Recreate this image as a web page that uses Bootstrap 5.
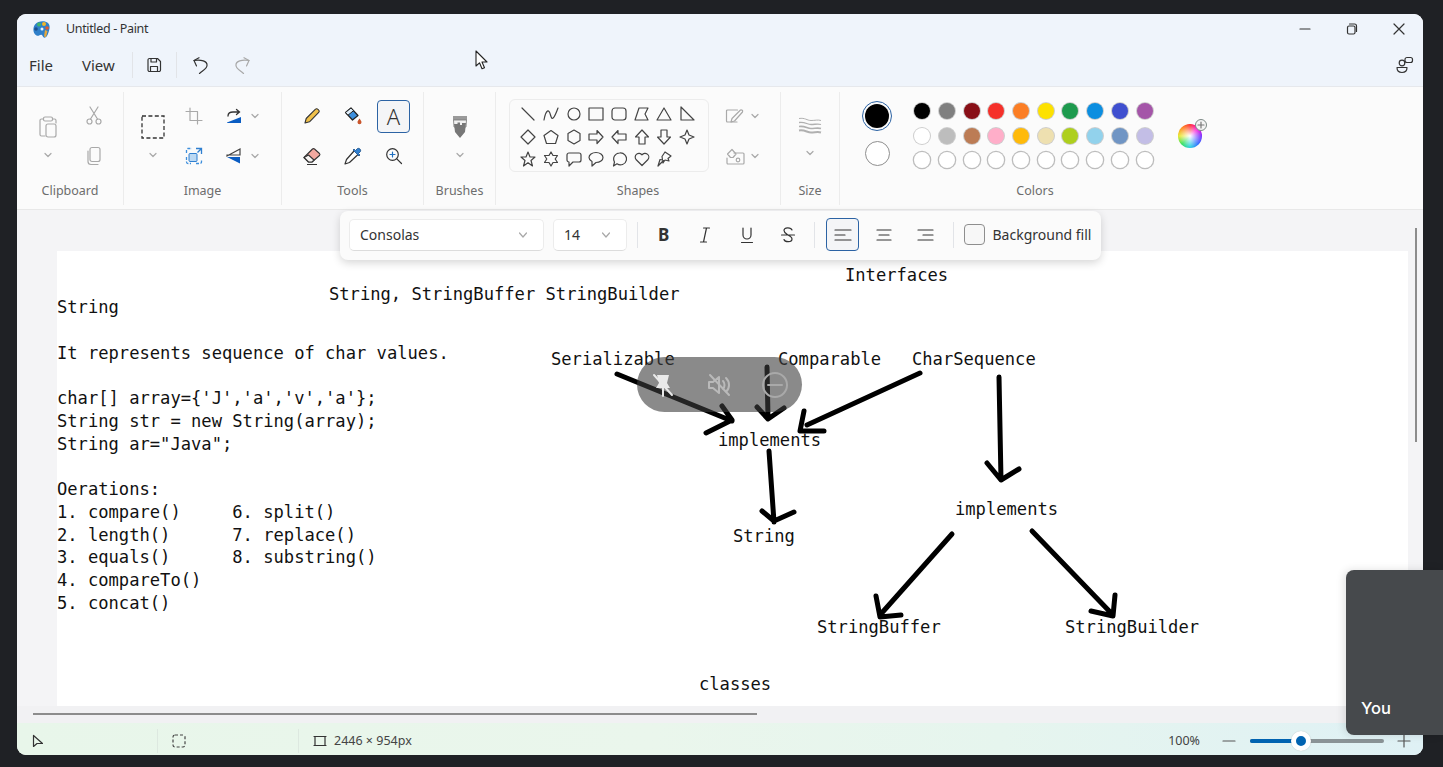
<!DOCTYPE html>
<html lang="en">

<head>
    <meta charset="UTF-8">
    <meta name="viewport" content="width=device-width, initial-scale=1.0">
    <title>Untitled - Paint</title>
    <link rel="stylesheet" href="https://cdn.jsdelivr.net/npm/bootstrap@5.3.3/dist/css/bootstrap.min.css">
    <style>
        html, body { height: 767px; }
        body { background: #1f2125; overflow: hidden; position: relative; font-family: "Noto Sans", "Open Sans", sans-serif; color: #333; }
        svg { display: block; flex: none; }
        .ico { fill: none; stroke: currentColor; stroke-width: 1.2; stroke-linecap: round; stroke-linejoin: round; }
        .chev { width: 10px; height: 10px; color: #a8a8a8; }
        .muted-ico { color: #a9a9a9; }
        .dark-ico { color: #333; }
        .soft-ico { color: #555; }

        .paint-win { position: absolute; left: 17px; top: 14px; width: 1406px; height: 741px; border-radius: 9px; overflow: hidden; display: flex; flex-direction: column; background: #fff; }

        .title-row { height: 30px; flex: none; background: #eff4fb; padding-left: 15px; }
        .title-text { margin-left: 15px; font-size: 12.5px; letter-spacing: -.35px; color: #333; }
        .win-btns { margin-left: auto; width: 142px; padding-right: 1px; }
        .win-btns > div { width: 47px; display: flex; justify-content: center; }

        .menu-row { height: 43px; flex: none; background: #eff4fb; border-bottom: 1px solid #e6e8ec; }
        .menu-item { font-size: 15px; color: #333; }
        .file-item { margin-left: 12px; }
        .view-item { margin-left: 29px; }
        .vsep { width: 1px; background: #e2e4e8; height: 26px; }
        .sep-a { margin-left: 17px; }
        .save-ico { margin-left: 12px; }
        .sep-b { margin-left: 13px; }
        .undo-ico { margin-left: 14px; }
        .redo-ico { margin-left: 25px; }

        .ribbon { height: 123px; flex: none; background: #fbfbfb; border-bottom: 1px solid #e8e8e8; padding: 5px 0 4px; display: flex; }
        .rgroup { display: flex; flex-direction: column; border-right: 1px solid #ececec; flex: none; }
        .rgroup.last { border-right: 0; }
        .g-clip { width: 107px; }
        .g-image { width: 158px; }
        .g-tools { width: 142px; }
        .g-brush { width: 72px; }
        .g-shapes { width: 285px; }
        .g-size { width: 59px; }
        .g-colors { width: 390px; }
        .rbody { height: 84px; padding-top: 4px; display: flex; }
        .pad-8 { padding-left: 8px; }
        .pad-9 { padding-left: 9px; }
        .pad-13 { padding-left: 13px; }
        .rlabel { height: 20px; margin-top: 5px; text-align: center; font-size: 12.5px; line-height: 20px; color: #6d6d6d; }
        .tool-grid { display: grid; grid-auto-rows: 40px; }
        .cols-clip { grid-template-columns: 46px; }
        .cols-image { grid-template-columns: 42px 50px; }
        .cols-tools { grid-template-columns: repeat(3, 41px); }
        .cols-outline { grid-template-columns: 60px; }
        .tcell { display: flex; align-items: center; justify-content: center; }
        .tcell.with-chev { justify-content: flex-start; gap: 5px; padding-left: 10px; }
        .cols-outline .tcell.with-chev { padding-left: 16px; }
        .big-tool { display: flex; flex-direction: column; align-items: center; padding-top: 19px; gap: 11px; }
        .w-46 { width: 46px; }
        .w-40 { width: 40px; }
        .size-tool { padding-top: 21px; gap: 13px; }
        .text-tool { width: 33px; height: 33px; border: 1px solid #2c63a4; border-radius: 4px; background: #f4f5f7; display: flex; align-items: center; justify-content: center; font-size: 22px; line-height: 1; font-weight: 300; color: #333; }
        .shape-box { width: 200px; height: 73px; margin-top: 3px; border: 1px solid #ececec; border-radius: 6px; padding: 3px 7px; display: grid; grid-template-columns: repeat(8, 22.7px); grid-auto-rows: 22.5px; }
        .shape-box > div { display: flex; align-items: center; justify-content: center; }
        .shape-box svg { color: #444; }
        .color-pair { width: 74px; padding-top: 5px; gap: 10px; }
        .ring-one { width: 30px; height: 30px; border-radius: 50%; border: 1.5px solid #2c63a4; padding: 2px; }
        .ring-one > div { width: 100%; height: 100%; border-radius: 50%; background: #000; }
        .ring-two { width: 25px; height: 25px; border-radius: 50%; border: 1px solid #8f8f8f; background: #fff; }
        .palette-grid { display: grid; grid-template-columns: repeat(10, 24.7px); grid-auto-rows: 24.5px; margin-top: 2.75px; margin-left: -4px; }
        .palette-grid > div { display: flex; align-items: center; justify-content: center; }
        .swatch { width: 16px; height: 16px; border-radius: 50%; box-shadow: 0 0 0 1px rgba(0,0,0,.18); }
        .swatch.empty { background: #fff; box-shadow: 0 0 0 1.3px #bdbdbd; }
        .wheel-wrap { margin-left: 21px; height: 79px; }
        .wheel { width: 24px; height: 24px; border-radius: 50%; background: radial-gradient(circle, #fff 0, rgba(255,255,255,0) 70%), conic-gradient(#ff2a2a, #ff00d0, #7a2cff, #2a6cff, #25d0e0, #2fe05a, #e8e82a, #ff8a1a, #ff2a2a); position: relative; }
        .wheel-plus { position: absolute; right: -5px; top: -5px; width: 12px; height: 12px; border-radius: 50%; background: #f4f4f4; border: 1px solid #7d8a86; display: flex; align-items: center; justify-content: center; color: #777; }

        .canvas-row { height: 496px; flex: none; background: #f4f4f6; display: flex; position: relative; }
        .canvas-scroll { flex: 1; padding: 41px 0 0 40px; }
        .paper { background: #fff; height: 455px; position: relative; overflow: hidden; }
        .paper-text { font-family: "DejaVu Sans Mono", "Liberation Mono", monospace; font-size: 17.14px; line-height: 22.75px; color: #111; margin: 90.6px 0 0; width: fit-content; overflow: visible; }
        .clabel { position: absolute; font-family: "DejaVu Sans Mono", "Liberation Mono", monospace; font-size: 17.14px; line-height: 22.75px; color: #111; white-space: pre; }
        .l-string { left: 0; top: 45px; }
        .l-heading { left: 272px; top: 32px; }
        .l-interfaces { left: 788px; top: 13px; }
        .l-serial { left: 494px; top: 97px; }
        .l-compar { left: 721px; top: 97px; }
        .l-charseq { left: 855px; top: 97px; }
        .l-impl-a { left: 661px; top: 178px; }
        .l-impl-b { left: 898px; top: 247px; }
        .l-str2 { left: 676px; top: 274px; }
        .l-buffer { left: 760px; top: 365px; }
        .l-builder { left: 1008px; top: 365px; }
        .l-classes { left: 642px; top: 422px; }
        .arrows { position: absolute; left: 0; top: 0; }
        .vbar { width: 15px; padding-top: 18px; }
        .vthumb { width: 2px; height: 214px; background: #8c8c8c; margin: 0 auto; }
        .hbar { height: 17px; flex: none; background: #f1f1f3; padding: 7px 0 0 16px; }
        .hthumb { width: 724px; height: 2px; background: #8c8c8c; }

        .status-row { height: 32px; flex: none; padding-top: 4px; background: linear-gradient(90deg, #e8f6ea 0%, #eaf6ec 45%, #e6f5ee 70%, #dff1f5 100%); font-size: 12.5px; color: #444; }
        .scell { width: 141px; height: 24px; border-right: 1px solid #dde8e0; padding-left: 14px; }
        .size-cell { padding-left: 14px; gap: 7px; }
        .zoom-minus { margin-left: 22px; }
        .zoom-plus { margin-right: 12px; }
        .zoom-track { width: 134px; height: 4px; border-radius: 2px; background: #8a9396; position: relative; margin: 0 13px 0 14px; }
        .zoom-fill { width: 48px; height: 4px; border-radius: 2px; background: #0063b1; }
        .zoom-thumb { position: absolute; left: 41px; top: -8px; width: 20px; height: 20px; border-radius: 50%; background: #0063b1; border: 5px solid #fff; box-shadow: 0 0 1px rgba(0,0,0,.25); }

        .text-bar { position: absolute; left: 323px; top: 1px; width: 761px; height: 49px; background: #fbfbfb; border-radius: 8px; box-shadow: 0 3px 8px rgba(0,0,0,.16); padding: 0 0 2px 9px; font-size: 14px; color: #333; z-index: 3; }
        .drop-box { height: 32px; background: #fff; border: 1px solid #ececec; border-bottom-color: #dcdcdc; border-radius: 5px; padding: 0 15px 0 10px; display: flex; align-items: center; justify-content: space-between; }
        .drop-font { width: 195px; }
        .drop-size { width: 74px; margin-left: 9px; }
        .fmt-btn { width: 41.5px; height: 33px; display: flex; align-items: center; justify-content: center; }
        .fmt-btn.on { width: 33px; border: 1px solid #2c63a4; border-radius: 4px; background: #f4f5f7; margin: 0 4px; }
        .bold-b { font-weight: 700; font-size: 17px; }
        .sep-c { margin: 0 5px 0 10px; }
        .sep-d { margin: 0 7px 0 5px; }
        .sep-e { margin: 0 10px 0 6.5px; }
        .fill-check { width: 21px; height: 21px; border: 1px solid #8e8e8e; border-radius: 4px; background: #f7f7f7; }
        .fill-label { margin-left: 8px; }

        .pill-overlay { position: absolute; left: 637px; top: 357px; width: 165px; height: 55px; border-radius: 28px; background: rgba(60,60,60,.6); padding: 0 13px; z-index: 4; justify-content: space-between; }
        .self-tile { position: absolute; left: 1346px; top: 570px; width: 97px; height: 165px; background: #46494c; border-radius: 8px 0 0 8px; box-shadow: -2px 0 8px rgba(0,0,0,.12); padding: 0 0 15px 15px; display: flex; align-items: flex-end; color: #fff; font-family: Inter, "Noto Sans", sans-serif; font-size: 16.5px; font-weight: 500; line-height: 24px; z-index: 5; }
        .mouse-arrow { position: absolute; left: 475px; top: 50px; z-index: 6; }
    </style>
</head>

<body>
    <div class="paint-win">
        <!-- title bar -->
        <div class="title-row d-flex align-items-center">
            <svg width="19" height="19" viewBox="0 0 19 19">
                <path d="M3 4.500C6 .8 13 .4 16 3c2.500 2.400 1.600 6.200.8 8.600-.8 2.800-2 6-4.300 6.200-1.700.1-1.500-2.600-3-3-1.700-.4-2.500 1.600-4.500.9C1.500 14.500 0 8.500 3 4.500z" fill="#2f7fc9"/>
                <circle cx="7" cy="4.500" r="2" fill="#3fb56b"/><circle cx="12" cy="4" r="2" fill="#f0b429"/><circle cx="15" cy="8" r="1.800" fill="#e2572b"/><circle cx="4" cy="9" r="1.800" fill="#1b4f91"/><circle cx="10" cy="9" r="1.500" fill="#e8f2fb"/>
                <path d="M13 10l2.500 1-1.500 6-2-.5z" fill="#e7a83a"/>
            </svg>
            <span class="title-text">Untitled - Paint</span>
            <div class="win-btns d-flex">
                <div><svg class="ico" width="12" height="12" viewBox="0 0 12 12"><path d="M1 6h10"/></svg></div>
                <div><svg class="ico" width="12" height="12" viewBox="0 0 12 12"><rect x="1.500" y="3" width="7.500" height="8" rx="1.500"/><path d="M3.500 1h5a2 2 0 0 1 2 2v5.500"/></svg></div>
                <div><svg class="ico" width="12" height="12" viewBox="0 0 12 12"><path d="M1 1l10 10M11 1L1 11"/></svg></div>
            </div>
        </div>

        <!-- menu row -->
        <div class="menu-row d-flex align-items-center">
            <span class="menu-item file-item">File</span>
            <span class="menu-item view-item">View</span>
            <div class="vsep sep-a"></div>
            <svg class="ico save-ico" width="18" height="18" viewBox="0 0 18 18"><path d="M3 4a1.500 1.500 0 0 1 1.500-1.500h8L15.500 5.500v8.500a1.500 1.500 0 0 1-1.500 1.500H4.500A1.500 1.500 0 0 1 3 14z"/><path d="M6 2.500v3.500h5.500V2.500M5.500 15.500v-5h7v5"/></svg>
            <div class="vsep sep-b"></div>
            <svg class="ico undo-ico" width="18" height="18" viewBox="0 0 18 18"><path d="M8 1.700L3 4.500L5.500 10"/><path d="M3 4.500C10 3.500 16.500 5 16 9.500C15.700 13 11 15 8.500 17.500"/></svg>
            <svg class="ico redo-ico muted-ico" width="18" height="18" viewBox="0 0 18 18"><path d="M10 1.700L15 4.500L12.500 10"/><path d="M15 4.500C8 3.500 1.500 5 2 9.500C2.300 13 7 15 9.500 17.500"/></svg>
            <svg class="ico ms-auto me-2" width="20" height="20" viewBox="0 0 20 20"><circle cx="7" cy="8" r="2.800"/><rect x="10" y="2.500" width="7.500" height="5" rx="2"/><path d="M2 12.500h10c0 3-2 5-5 5s-5-2-5-5z"/></svg>
        </div>

        <!-- ribbon -->
        <div class="ribbon">
            <div class="rgroup g-clip">
                <div class="rbody pad-8">
                    <div class="big-tool w-46">
                        <svg class="ico muted-ico" width="20" height="24" viewBox="0 0 20 24"><path d="M5 4H3.500A1.500 1.500 0 0 0 2 5.500v14A1.500 1.500 0 0 0 3.500 21H7"/><path d="M15 4h1.500A1.500 1.500 0 0 1 18 5.500V8"/><rect x="5.500" y="2" width="9" height="4" rx="1.500"/><rect x="8" y="9" width="10" height="13" rx="2"/></svg>
                        <svg class="ico chev" viewBox="0 0 10 10"><path d="M2 3.500l3 3 3-3"/></svg>
                    </div>
                    <div class="tool-grid cols-clip muted-ico">
                        <div class="tcell"><svg class="ico" width="18" height="20" viewBox="0 0 18 20"><circle cx="4.500" cy="15.500" r="2.500"/><circle cx="13.500" cy="15.500" r="2.500"/><path d="M5.500 13L13 1M12.500 13L5 1"/></svg></div>
                        <div class="tcell"><svg class="ico" width="16" height="20" viewBox="0 0 16 20"><rect x="4" y="1.500" width="10" height="14" rx="2"/><path d="M2 5v10.500a3 3 0 0 0 3 3h7"/></svg></div>
                    </div>
                </div>
                <div class="rlabel">Clipboard</div>
            </div>

            <div class="rgroup g-image">
                <div class="rbody pad-9">
                    <div class="big-tool w-40">
                        <svg width="24" height="24" viewBox="0 0 24 24"><rect x="1" y="1" width="22" height="22" fill="none" stroke="#333" stroke-width="1.300" stroke-dasharray="4 2.400"/></svg>
                        <svg class="ico chev" viewBox="0 0 10 10"><path d="M2 3.500l3 3 3-3"/></svg>
                    </div>
                    <div class="tool-grid cols-image">
                        <div class="tcell"><svg class="ico muted-ico" width="18" height="18" viewBox="0 0 18 18"><path d="M1 4.500h11.500V17M5 1v12.500h12"/></svg></div>
                        <div class="tcell with-chev">
                            <svg width="20" height="18" viewBox="0 0 20 18"><path d="M3 9c0-3 2-4 5-4h6M11.500 2.500L14.500 5l-3 2.500" fill="none" stroke="#333" stroke-width="1.300" stroke-linecap="round"/><path d="M2 15.500L16 10v6H2z" fill="#0a5cc2"/></svg>
                            <svg class="ico chev" viewBox="0 0 10 10"><path d="M2 3.500l3 3 3-3"/></svg>
                        </div>
                        <div class="tcell"><svg width="18" height="18" viewBox="0 0 18 18"><path d="M1.500 6V3a1.500 1.500 0 0 1 1.500-1.500h4M1.500 10v5a1.500 1.500 0 0 0 1.500 1.500h3M11 16.500h4a1.500 1.500 0 0 0 1.500-1.500v-3" fill="none" stroke="#3e8fdc" stroke-width="1.300" stroke-dasharray="3 1.500"/><rect x="4" y="6.500" width="8" height="8" rx="1" fill="#bcd9f3" stroke="#2f7fd0"/><path d="M11 1.500h5.500v5.500M16.500 1.500L12.500 5.500" fill="none" stroke="#2f7fd0" stroke-width="1.300"/></svg></div>
                        <div class="tcell with-chev">
                            <svg width="20" height="18" viewBox="0 0 20 18"><path d="M2 9L15 2v6H2z" fill="none" stroke="#444" stroke-width="1.200"/><path d="M2 10L15 16.500V10z" fill="#0a5cc2"/></svg>
                            <svg class="ico chev" viewBox="0 0 10 10"><path d="M2 3.500l3 3 3-3"/></svg>
                        </div>
                    </div>
                </div>
                <div class="rlabel">Image</div>
            </div>

            <div class="rgroup g-tools">
                <div class="rbody pad-9">
                    <div class="tool-grid cols-tools">
                        <div class="tcell"><svg width="18" height="18" viewBox="0 0 18 18"><path d="M2 16l1.200-4.500L12.500 2.200a1.500 1.500 0 0 1 2.200 0l1 1a1.500 1.500 0 0 1 0 2.200L6.500 14.800z" fill="#f0c14b" stroke="#333" stroke-width="1.100" stroke-linejoin="round"/></svg></div>
                        <div class="tcell"><svg width="20" height="20" viewBox="0 0 20 20"><path d="M2.500 6.500L8 2l7 7.500-5.500 4.500z" fill="#3d8fdc" stroke="#222" stroke-width="1.200" stroke-linejoin="round"/><path d="M2.500 6.500L8 2l2.500 2.700L5 9.200z" fill="#dfeefa" stroke="#222" stroke-width="1"/><path d="M16.500 12.500c1.300 1.800 2 2.700 2 3.700a2 2 0 0 1-4 0c0-1 .7-1.900 2-3.700z" fill="#c9552b"/></svg></div>
                        <div class="tcell"><div class="text-tool">A</div></div>
                        <div class="tcell"><svg width="20" height="20" viewBox="0 0 20 20"><path d="M2 11.500L10.500 3a1.500 1.500 0 0 1 2 0l5 4.500a1.500 1.500 0 0 1 0 2L10 16l-3.500 0z" fill="#f2a9a0" stroke="#333" stroke-width="1.100" stroke-linejoin="round"/><path d="M2 11.500l4.500 4.500H10l2-2-5.500-5z" fill="#f7f4f2" stroke="#333" stroke-width="1.100" stroke-linejoin="round"/><path d="M5 18.500h10" stroke="#333" stroke-width="1.100"/></svg></div>
                        <div class="tcell"><svg width="20" height="20" viewBox="0 0 20 20"><path d="M11 5L3.500 13.500 2 18l4.500-1.500L15 8.500" fill="#fff" stroke="#333" stroke-width="1.200" stroke-linejoin="round"/><path d="M10 4l6 6 1-1-1.500-1.500 2-2a2.300 2.300 0 0 0-3-3l-2 2L11 3z" fill="#2f7fd0" stroke="#1c4f86" stroke-width=".8"/></svg></div>
                        <div class="tcell"><svg class="ico dark-ico" width="18" height="18" viewBox="0 0 18 18"><circle cx="7.500" cy="7.500" r="5.800"/><path d="M11.800 11.800L16.500 16.500"/><path d="M5 7.500h5M7.500 5v5" stroke="#1f6fc0"/></svg></div>
                    </div>
                </div>
                <div class="rlabel">Tools</div>
            </div>

            <div class="rgroup g-brush">
                <div class="rbody justify-content-center">
                    <div class="big-tool">
                        <svg width="16" height="24" viewBox="0 0 16 24"><path d="M1 1h14v4H1z" fill="#9a9a9a"/><path d="M1.500 5h13l-.5 7H2z" fill="#f1f1f1" stroke="#777" stroke-width=".8"/><path d="M2 9h3.500V7.500H8V10h2V8h4l-1 9-5 6-5-6z" fill="#777"/></svg>
                        <svg class="ico chev" viewBox="0 0 10 10"><path d="M2 3.500l3 3 3-3"/></svg>
                    </div>
                </div>
                <div class="rlabel">Brushes</div>
            </div>

            <div class="rgroup g-shapes">
                <div class="rbody pad-13">
                    <div class="shape-box" id="shapes"></div>
                    <div class="tool-grid cols-outline muted-ico">
                        <div class="tcell with-chev">
                            <svg class="ico" width="20" height="18" viewBox="0 0 20 18"><path d="M12 15H2.500a1 1 0 0 1-1-1V4a1 1 0 0 1 1-1h10"/><path d="M6 15l1-3.500L15.500 3a1.500 1.500 0 0 1 2 2L9.500 14z"/></svg>
                            <svg class="ico chev" viewBox="0 0 10 10"><path d="M2 3.500l3 3 3-3"/></svg>
                        </div>
                        <div class="tcell with-chev">
                            <svg class="ico" width="20" height="18" viewBox="0 0 20 18"><path d="M9 6H18a1 1 0 0 1 1 1v9a1 1 0 0 1-1 1H3a1 1 0 0 1-1-1V11"/><path d="M2.500 7L7 2.500 11 7l-3 3.500H5.500z"/><circle cx="13" cy="13" r="1.800"/></svg>
                            <svg class="ico chev" viewBox="0 0 10 10"><path d="M2 3.500l3 3 3-3"/></svg>
                        </div>
                    </div>
                </div>
                <div class="rlabel">Shapes</div>
            </div>

            <div class="rgroup g-size">
                <div class="rbody justify-content-center">
                    <div class="big-tool size-tool">
                        <svg width="24" height="18" viewBox="0 0 24 18" fill="none" stroke="#b0b0b0"><path d="M1 1.500c6-1 8 2 12 2s7-1 10 0" stroke-width="1"/><path d="M1 5.500c6-1 8 2 12 2s7-1 10 0" stroke-width="1.300"/><path d="M1 9.500c6-1 8 2 12 2s7-1 10 0" stroke-width="1.600"/><path d="M1 13.500c6-1 8 2 12 2s7-1 10 0" stroke-width="2"/></svg>
                        <svg class="ico chev" viewBox="0 0 10 10"><path d="M2 3.500l3 3 3-3"/></svg>
                    </div>
                </div>
                <div class="rlabel">Size</div>
            </div>

            <div class="rgroup last g-colors">
                <div class="rbody">
                    <div class="color-pair d-flex flex-column align-items-center">
                        <div class="ring-one"><div></div></div>
                        <div class="ring-two"></div>
                    </div>
                    <div class="palette-grid" id="palette"></div>
                    <div class="wheel-wrap d-flex align-items-center">
                        <div class="wheel"><div class="wheel-plus"><svg class="ico" width="8" height="8" viewBox="0 0 8 8"><path d="M4 1v6M1 4h6"/></svg></div></div>
                    </div>
                </div>
                <div class="rlabel">Colors</div>
            </div>
        </div>

        <!-- canvas -->
        <div class="canvas-row">
            <div class="canvas-scroll">
                <div class="paper">
<pre class="paper-text">It represents sequence of char values.

char[] array={'J','a','v','a'};
String str = new String(array);
String ar="Java";

Oerations:
1. compare()     6. split()
2. length()      7. replace()
3. equals()      8. substring()
4. compareTo()
5. concat()</pre>
                    <span class="clabel l-string">String</span>
                    <span class="clabel l-heading">String, StringBuffer StringBuilder</span>
                    <span class="clabel l-interfaces">Interfaces</span>
                    <span class="clabel l-serial">Serializable</span>
                    <span class="clabel l-compar">Comparable</span>
                    <span class="clabel l-charseq">CharSequence</span>
                    <span class="clabel l-impl-a">implements</span>
                    <span class="clabel l-impl-b">implements</span>
                    <span class="clabel l-str2">String</span>
                    <span class="clabel l-buffer">StringBuffer</span>
                    <span class="clabel l-builder">StringBuilder</span>
                    <span class="clabel l-classes">classes</span>

                    <!-- hand drawn arrows, page coords shifted by the paper origin -->
                    <svg class="arrows" width="1351" height="455" viewBox="57 251 1351 455" fill="none" stroke="#000" stroke-width="5" stroke-linecap="round" stroke-linejoin="round">
                        <path d="M617 374L732 421M722 406L732 420L706 433"/>
                        <path d="M767 367L768 418M757 407L768 419L784 408"/>
                        <path d="M920 373L807 425M804 411L800 431L824 431"/>
                        <path d="M999 377L1001 480M987 463L1001 480L1019 469"/>
                        <path d="M769 451L774 522M762 511L774 521L794 512"/>
                        <path d="M952 534L880 615M876 596L880 617L901 615"/>
                        <path d="M1032 531L1113 615M1115 595L1113 616L1091 611"/>
                    </svg>
                </div>
            </div>
            <div class="vbar"><div class="vthumb"></div></div>

            <!-- text format bar -->
            <div class="text-bar d-flex align-items-center">
                <div class="drop-box drop-font">
                    <span>Consolas</span>
                    <svg class="ico chev" viewBox="0 0 10 10"><path d="M1.500 3l3.500 4 3.500-4"/></svg>
                </div>
                <div class="drop-box drop-size">
                    <span>14</span>
                    <svg class="ico chev" viewBox="0 0 10 10"><path d="M1.500 3l3.500 4 3.500-4"/></svg>
                </div>
                <div class="vsep sep-c"></div>
                <div class="fmt-btn"><span class="bold-b">B</span></div>
                <div class="fmt-btn"><svg class="ico" width="16" height="18" viewBox="0 0 16 18"><path d="M6.500 2h6M3.500 16h6M9.500 2L6.500 16"/></svg></div>
                <div class="fmt-btn"><svg class="ico" width="16" height="18" viewBox="0 0 16 18"><path d="M4 2v7a4 4 0 0 0 8 0V2M2.500 16.500h11"/></svg></div>
                <div class="fmt-btn"><svg class="ico" width="16" height="18" viewBox="0 0 16 18"><path d="M12 4c-1-3-8-3-8 .5 0 2 2 3 4 4.500 2 1 4 2 4 4 0 3.500-7 3.500-8 .5M1.500 9h13"/></svg></div>
                <div class="vsep sep-d"></div>
                <div class="fmt-btn on"><svg class="ico" width="18" height="14" viewBox="0 0 18 14"><path d="M1 2h16M1 7h10M1 12h16"/></svg></div>
                <div class="fmt-btn"><svg class="ico" width="18" height="14" viewBox="0 0 18 14"><path d="M2 2h14M4 7h10M2 12h14"/></svg></div>
                <div class="fmt-btn"><svg class="ico" width="18" height="14" viewBox="0 0 18 14"><path d="M2 2h15M7 7h10M2 12h15"/></svg></div>
                <div class="vsep sep-e"></div>
                <div class="fill-check"></div>
                <span class="fill-label">Background fill</span>
            </div>
        </div>

        <div class="hbar"><div class="hthumb"></div></div>

        <!-- status bar -->
        <div class="status-row d-flex align-items-center">
            <div class="scell d-flex align-items-center"><svg class="ico dark-ico" width="14" height="14" viewBox="0 0 14 14"><path d="M2.500 1.500v11L6 9.500l5.500 0z"/></svg></div>
            <div class="scell d-flex align-items-center"><svg width="14" height="14" viewBox="0 0 14 14"><rect x="1" y="1" width="12" height="12" rx="2" fill="none" stroke="#444" stroke-width="1.200" stroke-dasharray="3 2"/></svg></div>
            <div class="size-cell d-flex align-items-center">
                <svg class="ico dark-ico" width="14" height="14" viewBox="0 0 14 14"><path d="M2 2.500h10v9H2zM1 2.500h2M11 2.500h2M1 11.500h2M11 11.500h2"/></svg>
                <span>2446 × 954px</span>
            </div>
            <div class="ms-auto d-flex align-items-center">
                <span>100%</span>
                <svg class="ico soft-ico zoom-minus" width="14" height="14" viewBox="0 0 14 14"><path d="M1 7h12"/></svg>
                <div class="zoom-track"><div class="zoom-fill"></div><div class="zoom-thumb"></div></div>
                <svg class="ico soft-ico zoom-plus" width="14" height="14" viewBox="0 0 14 14"><path d="M1 7h12M7 1v12"/></svg>
            </div>
        </div>
    </div>

    <!-- meeting overlay -->
    <div class="pill-overlay d-flex align-items-center">
        <svg width="26" height="26" viewBox="0 0 26 26" fill="none" stroke="#e9e9e9" stroke-width="2" stroke-linecap="round"><path d="M7 3h12l-2 8 3 5H6l3-5z" fill="#e9e9e9" stroke="none"/><path d="M13 16v8M4 3l18 20"/></svg>
        <svg width="26" height="26" viewBox="0 0 26 26" fill="none" stroke="#b9b9b9" stroke-width="2" stroke-linecap="round" stroke-linejoin="round"><path d="M3 10v6h4l6 5V5L7 10z"/><path d="M17 9c2 2 2 6 0 8M20 6c4 4 4 10 0 14M4 3l19 20"/></svg>
        <svg width="28" height="28" viewBox="0 0 28 28" fill="none" stroke="#a9a9a9" stroke-width="2" stroke-linecap="round"><circle cx="14" cy="14" r="12"/><path d="M7 14h14"/></svg>
    </div>

    <div class="self-tile">You</div>

    <svg class="mouse-arrow" width="14" height="21" viewBox="0 0 14 21"><path d="M1 1v15l3.500-3.200 2.500 6 2.500-1-2.500-5.800h5z" fill="#fff" stroke="#222" stroke-width="1.100" stroke-linejoin="round"/></svg>

    <script src="https://cdn.jsdelivr.net/npm/bootstrap@5.3.3/dist/js/bootstrap.bundle.min.js"></script>
    <script>
        // shape gallery, 16x16 boxes
        const shapes = [
            '<path d="M2 2L14 14"/>',
            '<path d="M1 14C3 3 6 3 7.500 9S11 13 15 2"/>',
            '<circle cx="8" cy="8" r="6"/>',
            '<rect x="1" y="2" width="14" height="12"/>',
            '<rect x="1" y="2" width="14" height="12" rx="3"/>',
            '<path d="M1 14L5 2H14L11 8L14 14Z"/>',
            '<path d="M8 2L15 14H1Z"/>',
            '<path d="M2 1V14H15Z"/>',
            '<path d="M8 1L15 8L8 15L1 8Z"/>',
            '<path d="M8 1.500L15 6.500L12.500 14.500H3.500L1 6.500Z"/>',
            '<path d="M8 1L14 4.500V11.500L8 15L2 11.500V4.500Z"/>',
            '<path d="M1 5H9V1.500L15 8L9 14.500V11H1Z"/>',
            '<path d="M15 5H7V1.500L1 8L7 14.500V11H15Z"/>',
            '<path d="M5 15V8H1.500L8 1L14.500 8H11V15Z"/>',
            '<path d="M5 1V8H1.500L8 15L14.500 8H11V1Z"/>',
            '<path d="M8 1L10 6L15 8L10 10L8 15L6 10L1 8L6 6Z"/>',
            '<path d="M8 1L10 6H15L11 9.500L12.500 15L8 11.800L3.500 15L5 9.500L1 6H6Z"/>',
            '<path d="M8 1L10 4.500H14.500L12.200 8L14.500 11.500H10L8 15L6 11.500H1.500L3.800 8L1.500 4.500H6Z"/>',
            '<path d="M3 2H13A2 2 0 0 1 15 4V9A2 2 0 0 1 13 11H7L3 15V11A2 2 0 0 1 1 9V4A2 2 0 0 1 3 2Z"/>',
            '<path d="M8 1.500C12 1.500 15 3.800 15 6.500S12 11.500 8 11.500L4 15V10.500C2.300 9.500 1 8 1 6.500C1 3.800 4 1.500 8 1.500Z"/>',
            '<path d="M8.500 2A6 6 0 1 1 6 12.800L2.500 15L3.500 11A6 6 0 0 1 8.500 2Z"/>',
            '<path d="M8 14.500L2 8.500A3.800 3.800 0 0 1 8 3.800A3.800 3.800 0 0 1 14 8.500Z"/>',
            '<path d="M9 1L15 5L12 7.500L13 10L9 9L7 12L7.500 9.500L2 15L4 8.500L6.500 9L6 5.500Z"/>'
        ]
        let shapeBox = document.getElementById("shapes")
        shapes.forEach((val) => {
            let cell = document.createElement("div")
            cell.innerHTML = `<svg class="ico" width="16" height="16" viewBox="0 0 16 16">${val}</svg>`
            shapeBox.appendChild(cell)
        })

        // colour palette
        const colors = [
            "#000000", "#7f7f7f", "#880f17", "#f5302a", "#fb7e25", "#fde100", "#1e9a4e", "#0c8ee0", "#3f4fcf", "#a455a8",
            "#ffffff", "#bdbdbd", "#bc7c55", "#ffaec9", "#ffba0a", "#eee0b0", "#aecf1e", "#92d2ec", "#7095c4", "#c3bee6",
            "", "", "", "", "", "", "", "", "", ""
        ]
        let palette = document.getElementById("palette")
        colors.forEach((val) => {
            let cell = document.createElement("div")
            cell.innerHTML = val
                ? `<div class="swatch" style="background:${val}"></div>`
                : `<div class="swatch empty"></div>`
            palette.appendChild(cell)
        })
    </script>
</body>

</html>
